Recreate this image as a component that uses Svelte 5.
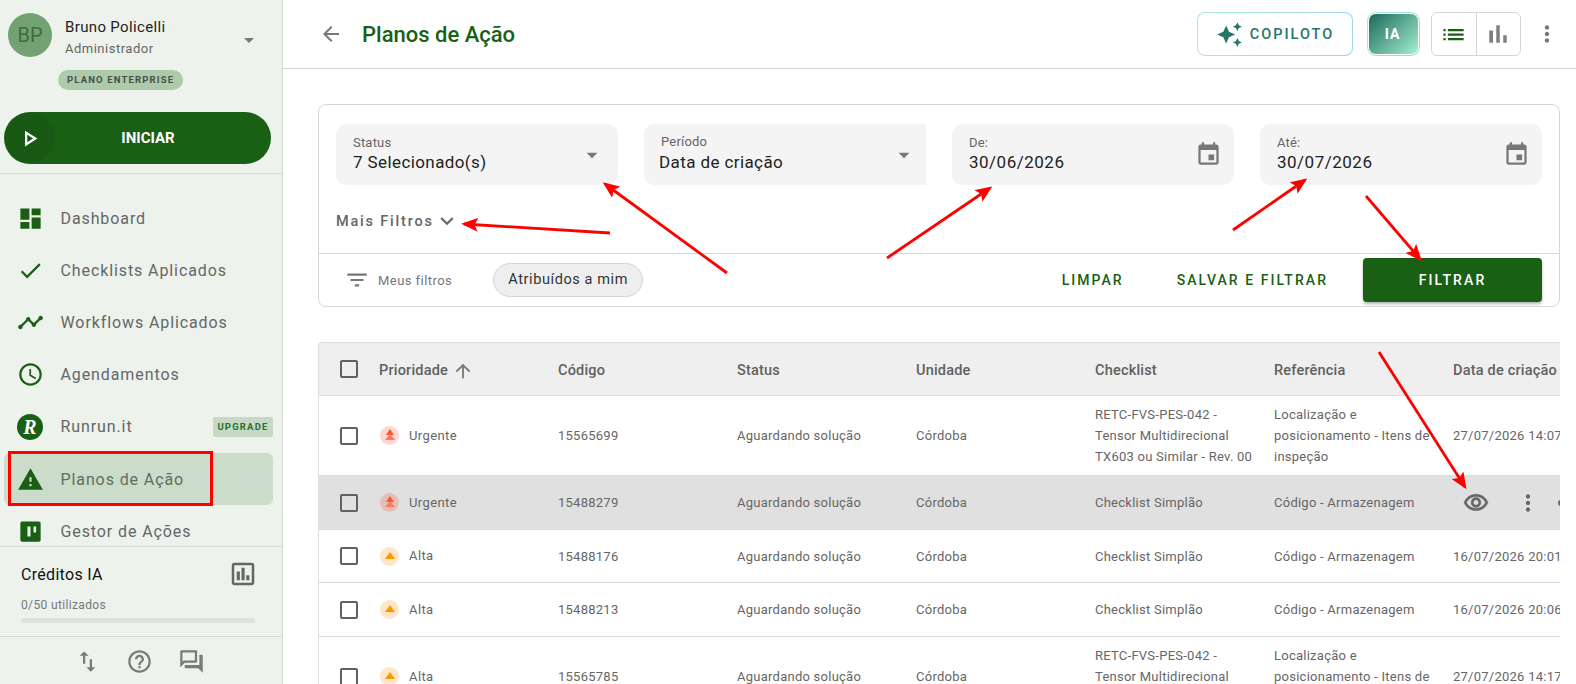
<script>
  const p = {
    dash: 'M3 13h8V3H3v10zm0 8h8v-6H3v6zm10 0h8V11h-8v10zm0-18v6h8V3h-8z',
    check: 'M9 16.17L4.83 12l-1.42 1.41L9 19 21 7l-1.41-1.41z',
    timeline: 'M23 8c0 1.1-.9 2-2 2-.18 0-.35-.02-.51-.07l-3.56 3.55c.05.16.07.34.07.52 0 1.1-.9 2-2 2s-2-.9-2-2c0-.18.02-.36.07-.52l-2.55-2.55c-.16.05-.34.07-.52.07s-.36-.02-.52-.07l-4.55 4.56c.05.16.07.33.07.51 0 1.1-.9 2-2 2s-2-.9-2-2 .9-2 2-2c.18 0 .35.02.51.07l4.56-4.55C8.02 9.36 8 9.18 8 9c0-1.1.9-2 2-2s2 .9 2 2c0 .18-.02.36-.07.52l2.55 2.55c.16-.05.34-.07.52-.07s.36.02.52.07l3.55-3.56C19.02 8.35 19 8.18 19 8c0-1.1.9-2 2-2s2 .9 2 2z',
    clock: 'M11.99 2C6.47 2 2 6.48 2 12s4.47 10 9.99 10C17.52 22 22 17.52 22 12S17.52 2 11.99 2zM12 20c-4.42 0-8-3.58-8-8s3.58-8 8-8 8 3.58 8 8-3.58 8-8 8zm.5-13H11v6l5.25 3.15.75-1.23-4.5-2.67z',
    warn: 'M1 21h22L12 2 1 21zm12-3h-2v-2h2v2zm0-4h-2v-4h2v4z',
    kanban: 'M19.5 3h-15C3.7 3 3 3.7 3 4.5v15c0 .8.7 1.5 1.5 1.5h15c.8 0 1.5-.7 1.5-1.5v-15c0-.8-.7-1.5-1.5-1.5zM9.3 7.5H12v9H9.3v-9zm5.4 0H17v5.4h-2.3V7.5z',
    chart: 'M19 3H5c-1.1 0-2 .9-2 2v14c0 1.1.9 2 2 2h14c1.1 0 2-.9 2-2V5c0-1.1-.9-2-2-2zm0 16H5V5h14v14zM7 10h2.5v7H7zM10.8 7h2.5v10h-2.5zM14.6 13h2.5v4h-2.5z',
    swap: 'M16 17.01V10h-2v7.01h-3L15 21l4-3.99h-3zM9 3L5 6.99h3V14h2V6.99h3L9 3z',
    help: 'M11 18h2v-2h-2v2zm1-16C6.48 2 2 6.48 2 12s4.48 10 10 10 10-4.48 10-10S17.52 2 12 2zm0 18c-4.41 0-8-3.59-8-8s3.59-8 8-8 8 3.59 8 8-3.59 8-8 8zm0-14c-2.21 0-4 1.79-4 4h2c0-1.1.9-2 2-2s2 .9 2 2c0 2-3 1.75-3 5h2c0-2.25 3-2.5 3-5 0-2.21-1.79-4-4-4z',
    forum: 'M15 4v7H5.17l-.59.59-.58.58V4h11m1-2H3c-.55 0-1 .45-1 1v14l4-4h10c.55 0 1-.45 1-1V3c0-.55-.45-1-1-1zm5 4h-2v9H6v2c0 .55.45 1 1 1h11l4 4V7c0-.55-.45-1-1-1z',
    back: 'M20 11H7.83l5.59-5.59L12 4l-8 8 8 8 1.41-1.41L7.83 13H20v-2z',
    spark: 'M19 9l1.25-2.75L23 5l-2.75-1.25L19 1l-1.25 2.75L15 5l2.75 1.25L19 9zm-7.5.5L9 4 6.5 9.5 1 12l5.5 2.5L9 20l2.5-5.5L17 12l-5.5-2.5zM19 15l-1.25 2.75L15 19l2.75 1.25L19 23l1.25-2.75L23 19l-2.75-1.25L19 15z',
    list: 'M3 13h2v-2H3v2zm0 4h2v-2H3v2zm0-8h2V7H3v2zm4 4h14v-2H7v2zm0 4h14v-2H7v2zM7 7v2h14V7H7z',
    bars: 'M5 9.2h3V19H5zM10.6 5h2.8v14h-2.8zm5.6 8H19v6h-2.8z',
    more: 'M12 8c1.1 0 2-.9 2-2s-.9-2-2-2-2 .9-2 2 .9 2 2 2zm0 2c-1.1 0-2 .9-2 2s.9 2 2 2 2-.9 2-2-.9-2-2-2zm0 6c-1.1 0-2 .9-2 2s.9 2 2 2 2-.9 2-2-.9-2-2-2z',
    event: 'M17 12h-5v5h5v-5zM16 1v2H8V1H6v2H5c-1.11 0-1.99.9-1.99 2L3 19c0 1.1.89 2 2 2h14c1.1 0 2-.9 2-2V5c0-1.1-.9-2-2-2h-1V1h-2zm3 18H5V8h14v11z',
    filter: 'M10 18h4v-2h-4v2zM3 6v2h18V6H3zm3 7h12v-2H6v2z',
    expand: 'M16.59 8.59L12 13.17 7.41 8.59 6 10l6 6 6-6z',
    up: 'M4 12l1.41 1.41L11 7.83V20h2V7.83l5.58 5.59L20 12l-8-8-8 8z',
    eye: 'M12 6c3.79 0 7.17 2.13 8.82 5.5C19.17 14.87 15.79 17 12 17s-7.17-2.13-8.82-5.5C4.83 8.13 8.21 6 12 6m0-2C7 4 2.73 7.11 1 11.5 2.73 15.89 7 19 12 19s9.27-3.11 11-7.5C21.27 7.11 17 4 12 4zm0 5c1.38 0 2.5 1.12 2.5 2.5S13.38 14 12 14s-2.5-1.12-2.5-2.5S10.62 9 12 9m0-2c-2.48 0-4.5 2.02-4.5 4.5S9.52 16 12 16s4.5-2.02 4.5-4.5S14.48 7 12 7z',
    box: 'M19 5v14H5V5h14m0-2H5c-1.1 0-2 .9-2 2v14c0 1.1.9 2 2 2h14c1.1 0 2-.9 2-2V5c0-1.1-.9-2-2-2z',
    play: 'M10 8.64L15.27 12 10 15.36V8.64M8 5v14l11-7L8 5z',
    caret: 'M7 10l5 5 5-5z'
  };
  const nav = [
    { label: 'Dashboard', icon: 'dash' },
    { label: 'Checklists Aplicados', icon: 'check' },
    { label: 'Workflows Aplicados', icon: 'timeline' },
    { label: 'Agendamentos', icon: 'clock' },
    { label: 'Runrun.it', runrun: true },
    { label: 'Planos de Ação', icon: 'warn', active: true },
    { label: 'Gestor de Ações', icon: 'kanban' }
  ];
  const longCheck = ['RETC-FVS-PES-042 -', 'Tensor Multidirecional', 'TX603 ou Similar - Rev. 00'];
  const longRef = ['Localização e', 'posicionamento - Itens de', 'inspeção'];
  const shortCheck = ['Checklist Simplão'];
  const shortRef = ['Código - Armazenagem'];
  const rows = [
    { pr: 'Urgente', code: '15565699', check: longCheck, ref: longRef, date: '27/07/2026 14:07', size: 'tall' },
    { pr: 'Urgente', code: '15488279', check: shortCheck, ref: shortRef, hover: true, size: 'mid' },
    { pr: 'Alta', code: '15488176', check: shortCheck, ref: shortRef, date: '16/07/2026 20:01', size: 'low' },
    { pr: 'Alta', code: '15488213', check: shortCheck, ref: shortRef, date: '16/07/2026 20:06', size: 'low2' },
    { pr: 'Alta', code: '15565785', check: longCheck, ref: longRef, date: '27/07/2026 14:17', size: 'tall' }
  ];
  const arrows = [
    [727, 273, 605, 184],
    [610, 233, 464, 224],
    [887, 258, 990, 188],
    [1233, 230, 1305, 180],
    [1366, 196, 1420, 259],
    [1379, 352, 1465, 487]
  ];
</script>

<div class="page">
  <aside class="side">
    <div class="profile">
      <div class="avatar">BP</div>
      <div class="who">
        <div class="name">Bruno Policelli</div>
        <div class="role">Administrador</div>
      </div>
      <svg class="caret-top" viewBox="0 0 24 24"><path d={p.caret} /></svg>
    </div>
    <div class="plan-wrap"><span class="plan">PLANO ENTERPRISE</span></div>
    <button class="start">
      <span class="start-ic"><svg viewBox="0 0 24 24"><path d={p.play} /></svg></span>
      <span class="start-t">INICIAR</span>
    </button>
    <nav class="nav">
      {#each nav as n}
        <div class="item" class:active={n.active}>
          <span class="nav-ic">
            {#if n.runrun}
              <span class="rr">R</span>
            {:else}
              <svg viewBox="0 0 24 24"><path d={p[n.icon]} fill-rule="evenodd" /></svg>
            {/if}
          </span>
          <span class="nav-t">{n.label}</span>
          {#if n.runrun}<span class="upg">UPGRADE</span>{/if}
        </div>
      {/each}
    </nav>
    <div class="credits">
      <div class="cr-top">
        <span class="cr-t">Créditos IA</span>
        <svg viewBox="0 0 24 24"><path d={p.chart} /></svg>
      </div>
      <div class="cr-u">0/50 utilizados</div>
      <div class="cr-bar"></div>
    </div>
    <div class="foot">
      <svg viewBox="0 0 24 24"><path d={p.swap} /></svg>
      <svg viewBox="0 0 24 24"><path d={p.help} /></svg>
      <svg viewBox="0 0 24 24"><path d={p.forum} /></svg>
    </div>
  </aside>

  <main class="main">
    <header class="top">
      <svg class="back" viewBox="0 0 24 24"><path d={p.back} /></svg>
      <h1>Planos de Ação</h1>
      <div class="grow"></div>
      <div class="copi"><div class="copi-in">
        <svg viewBox="0 0 24 24"><path d={p.spark} /></svg>
        <span>COPILOTO</span>
      </div></div>
      <div class="ia"><div class="ia-in">IA</div></div>
      <div class="toggle">
        <span class="tg"><svg class="on" viewBox="0 0 24 24"><path d={p.list} /></svg></span>
        <span class="tg"><svg viewBox="0 0 24 24"><path d={p.bars} /></svg></span>
      </div>
      <svg class="kebab" viewBox="0 0 24 24"><path d={p.more} /></svg>
    </header>

    <div class="content">
      <section class="card">
        <div class="fields">
          <div class="field">
            <div class="lab">Status</div>
            <div class="val">7 Selecionado(s)</div>
            <svg class="fic caret" viewBox="0 0 24 24"><path d={p.caret} /></svg>
          </div>
          <div class="field period">
            <div class="lab">Período</div>
            <div class="val">Data de criação</div>
            <svg class="fic caret" viewBox="0 0 24 24"><path d={p.caret} /></svg>
          </div>
          <div class="field date">
            <div class="lab">De:</div>
            <div class="val">30/06/2026</div>
            <svg class="fic" viewBox="0 0 24 24"><path d={p.event} /></svg>
          </div>
          <div class="field date">
            <div class="lab">Até:</div>
            <div class="val">30/07/2026</div>
            <svg class="fic" viewBox="0 0 24 24"><path d={p.event} /></svg>
          </div>
        </div>
        <div class="more">
          <span>Mais Filtros</span>
          <svg viewBox="0 0 24 24"><path d={p.expand} /></svg>
        </div>
        <div class="actions">
          <svg class="filt" viewBox="0 0 24 24"><path d={p.filter} /></svg>
          <span class="meus">Meus filtros</span>
          <span class="chip">Atribuídos a mim</span>
          <div class="grow"></div>
          <span class="txt-btn limpar">LIMPAR</span>
          <span class="txt-btn salvar">SALVAR E FILTRAR</span>
          <span class="filtrar">FILTRAR</span>
        </div>
      </section>

      <section class="table">
        <div class="row head">
          <div class="cb"><svg viewBox="0 0 24 24"><path d={p.box} /></svg></div>
          <div class="hc">Prioridade <svg class="up" viewBox="0 0 24 24"><path d={p.up} /></svg></div>
          <div>Código</div>
          <div>Status</div>
          <div>Unidade</div>
          <div>Checklist</div>
          <div>Referência</div>
          <div class="nw">Data de criação</div>
        </div>
        {#each rows as r}
          <div class="row {r.size}" class:hover={r.hover}>
            <div class="cb"><svg viewBox="0 0 24 24"><path d={p.box} /></svg></div>
            <div class="prio">
              {#if r.pr === 'Urgente'}
                <span class="pi red"><i class="tri t1"></i><i class="tri t2"></i></span>
              {:else}
                <span class="pi org"><i class="tri t3"></i></span>
              {/if}
              <span class="pt">{r.pr}</span>
            </div>
            <div>{r.code}</div>
            <div>Aguardando solução</div>
            <div>Córdoba</div>
            <div class="multi">{#each r.check as l}<div class="nw">{l}</div>{/each}</div>
            <div class="multi">{#each r.ref as l}<div class="nw">{l}</div>{/each}</div>
            {#if r.hover}
              <div class="acts">
                <svg class="eye" viewBox="0 0 24 24"><path d={p.eye} /></svg>
                <svg class="kb" viewBox="0 0 24 24"><path d={p.more} /></svg>
                <span class="edge"></span>
              </div>
            {:else}
              <div class="nw">{r.date}</div>
            {/if}
          </div>
        {/each}
      </section>
    </div>
  </main>

  <div class="ann-box"></div>
  <svg class="ann" viewBox="0 0 1576 684">
    <defs>
      <marker id="h" markerWidth="6" markerHeight="5" refX="5" refY="2.5" orient="auto" markerUnits="strokeWidth">
        <path d="M0 0L6 2.5L0 5L1.2 2.5z" fill="#f00" />
      </marker>
    </defs>
    {#each arrows as a}
      <line x1={a[0]} y1={a[1]} x2={a[2]} y2={a[3]} stroke="#f00" stroke-width="2.8" marker-end="url(#h)" />
    {/each}
  </svg>
</div>

<style>
  :global(body) { margin: 0; background: #fff; }
  .page { position: relative; display: flex; width: 1576px; height: 684px; overflow: hidden; font-family: Roboto, "Liberation Sans", sans-serif; color: #666; }
  svg { fill: currentColor; display: block; flex: none; }

  .side { width: 282px; flex: none; background: #edf2ed; border-right: 1px solid #d4d8d4; display: flex; flex-direction: column; height: 684px; }
  .profile { display: flex; align-items: center; padding: 13px 8px 0; height: 44px; flex: none; }
  .avatar { width: 44px; height: 44px; border-radius: 50%; background: #72a172; color: #3f6b42; font-size: 20px; display: flex; align-items: center; justify-content: center; flex: none; }
  .who { margin-left: 13px; flex: 1; }
  .name { font-size: 15px; color: #222; letter-spacing: .35px; line-height: 20px; margin-top: 6px; }
  .role { font-size: 13px; color: #666; letter-spacing: .5px; line-height: 20px; margin-top: 2px; }
  .caret-top { width: 24px; height: 24px; color: #777; margin-right: 13px; margin-top: 9px; }
  .plan-wrap { padding: 13px 0 0 58px; height: 20px; flex: none; margin-top: -2px; }
  .plan { display: inline-block; height: 20px; line-height: 20px; padding: 0 9px; border-radius: 10px; background: #adcaad; color: #474f47; font-size: 9.5px; font-weight: 700; letter-spacing: 1.15px; }
  .start { margin: 24px 0 0 4px; width: 267px; height: 52px; border: 0; border-radius: 26px; background: #195f14; color: #fff; display: flex; align-items: center; padding: 0; font: inherit; flex: none; }
  .start-ic { width: 50px; height: 50px; border-radius: 50%; background: #185a13; display: flex; align-items: center; justify-content: center; margin-left: 1px; }
  .start-ic svg { width: 27px; height: 27px; margin-left: -1px; }
  .start-t { flex: 1; text-align: center; font-weight: 700; font-size: 15px; padding-right: 30px; }
  .nav { margin-top: 9px; border-top: 1px solid #d6dad6; flex: 1; min-height: 0; overflow: hidden; padding-top: 18px; }
  .item { height: 52.2px; margin: 0 9px 0 4px; display: flex; align-items: center; padding-left: 13px; border-radius: 6px; }
  .item.active { background: #cbdcca; }
  .nav-ic { width: 26px; height: 26px; color: #195f14; margin-right: 17.5px; display: flex; align-items: center; justify-content: center; flex: none; }
  .nav-ic svg { width: 27px; height: 27px; }
  .rr { width: 26px; height: 26px; flex: none; border-radius: 50%; background: #195f14; color: #fff; font: italic 700 20px/26px "Liberation Serif", serif; text-align: center; }
  .nav-t { font-size: 16px; letter-spacing: .9px; color: #666; flex: 1; }
  .active .nav-t { color: #5e6f5e; }
  .upg { width: 60px; height: 20px; line-height: 20px; background: #c5d9c5; color: #2c6e2c; border-radius: 2px; font-size: 9.5px; font-weight: 700; letter-spacing: 1.2px; text-align: center; }

  .credits { height: 89px; flex: none; border-top: 1px solid #d9dcd9; border-bottom: 1px solid #d9dcd9; padding: 0 27px 0 21px; }
  .cr-top { display: flex; align-items: center; justify-content: space-between; height: 30px; margin-top: 12px; }
  .cr-top svg { width: 30px; height: 30px; color: #666; margin-right: -3px; }
  .cr-t { font-size: 16px; color: #111; letter-spacing: .3px; }
  .cr-u { font-size: 12px; color: #777; letter-spacing: .35px; margin-top: 8px; line-height: 16px; }
  .cr-bar { height: 5px; border-radius: 3px; background: #dfe1df; margin-top: 5px; }
  .foot { height: 47px; box-sizing: border-box; padding: 2px 4px 0 0; flex: none; display: flex; align-items: center; justify-content: center; gap: 25px; color: #7a7a7a; }
  .foot svg { width: 27px; height: 27px; }

  .main { flex: 1; min-width: 0; display: flex; flex-direction: column; }
  .top { height: 68px; flex: none; border-bottom: 1px solid #d7d7d7; display: flex; align-items: center; padding-right: 16px; }
  .back { width: 24px; height: 24px; color: #777; margin-left: 36px; }
  h1 { font-size: 22px; font-weight: 500; margin: 0 0 0 19px; color: #195f14; }
  .grow { flex: 1; }
  .copi { width: 156px; height: 44px; border-radius: 8px; padding: 1px; box-sizing: border-box; background: linear-gradient(90deg, #a8ebd3, #9fd0ee); }
  .copi-in { height: 100%; border-radius: 7px; background: #fff; display: flex; align-items: center; justify-content: center; gap: 7px; color: #24756a; }
  .copi-in svg { width: 27px; height: 27px; }
  .copi-in span { font-size: 14.5px; font-weight: 500; letter-spacing: 2px; }
  .ia { width: 53px; height: 44px; margin-left: 14px; border-radius: 9px; padding: 1px; box-sizing: border-box; background: linear-gradient(135deg, #a8ebd3, #9fd0ee); }
  .ia-in { height: 100%; border-radius: 8px; border: 1px solid #fff; box-sizing: border-box; background: linear-gradient(135deg, #226f62 5%, #a4f0cf 100%); color: #fff; font-size: 14px; font-weight: 700; letter-spacing: 1px; display: flex; align-items: center; justify-content: center; padding-right: 2px; }
  .toggle { width: 90px; height: 44px; margin-left: 11px; border: 1px solid #d6d6d6; border-radius: 6px; box-sizing: border-box; display: flex; }
  .tg { flex: 1; display: flex; align-items: center; justify-content: center; color: #808080; }
  .tg:first-child { border-right: 1px solid #d6d6d6; }
  .tg svg { width: 27px; height: 27px; }
  .tg svg.on { color: #195f14; }
  .tg svg:not(.on) { width: 30px; height: 30px; }
  .kebab { width: 26px; height: 26px; color: #777; margin-left: 13px; }

  .content { padding: 35px 16px 0 35px; flex: 1; min-height: 0; }
  .card { border: 1px solid #d7d7d7; border-radius: 8px; height: 203px; box-sizing: border-box; display: flex; flex-direction: column; }
  .fields { display: grid; grid-template-columns: repeat(4, 282px); gap: 26px; padding: 19px 0 0 17px; }
  .field { position: relative; height: 61px; background: #f4f4f4; border-radius: 10px; box-sizing: border-box; padding: 11px 0 0 17px; }
  .field.period { border-radius: 10px 0 0 10px; padding-left: 17px; padding-top: 10px; }
  .period .val { margin-left: -2px; margin-top: 1px; }
  .lab { font-size: 13px; line-height: 16px; color: #666; letter-spacing: .2px; }
  .val { font-size: 17px; line-height: 22px; color: #222; letter-spacing: .4px; margin-top: 0; }
  .date .val { letter-spacing: .5px; }
  .fic { position: absolute; right: 12px; top: 17px; width: 27px; height: 27px; color: #777; }
  .caret { right: 13px; top: 18px; width: 26px; height: 26px; }
  .period .caret { right: 9px; }
  .more { display: flex; align-items: center; gap: 0; margin: 24px 0 0 17px; height: 24px; color: #666; font-size: 14.5px; font-weight: 500; letter-spacing: 1.8px; flex: none; }
  .more svg { width: 26px; height: 26px; }
  .actions { margin-top: 20px; border-top: 1px solid #d7d7d7; flex: 1; display: flex; align-items: center; padding: 0 17px 0 25px; }
  .filt { width: 26px; height: 26px; color: #777; }
  .meus { margin-left: 8px; font-size: 13px; letter-spacing: .45px; color: #777; }
  .chip { margin-left: 41px; height: 34px; line-height: 32px; padding: 0 14px; box-sizing: border-box; border: 1px solid #d7d7d7; border-radius: 17px; background: #eeeeee; color: #333; font-size: 14.5px; letter-spacing: .6px; }
  .txt-btn { color: #195f14; font-size: 14px; font-weight: 500; letter-spacing: 2.05px; }
  .salvar { margin-left: 53px; }
  .filtrar { margin-left: 35px; width: 179px; height: 44px; line-height: 44px; text-align: center; border-radius: 4px; background: #195f14; color: #fff; font-size: 14px; font-weight: 500; letter-spacing: 2.1px; box-shadow: 0 2px 3px rgba(0,0,0,.3); }

  .table { margin-top: 35px; border: 1px solid #dedede; border-bottom: 0; border-right: 0; border-radius: 4px 0 0 0; overflow: hidden; }
  .row { display: grid; grid-template-columns: 60px repeat(6, 179px) 1fr; align-items: center; border-bottom: 1px solid #dcdcdc; box-sizing: border-box; font-size: 13px; color: #666; letter-spacing: .25px; line-height: 21px; background: #fff; }
  .head { height: 53px; padding-top: 3px; background: #efefef; font-size: 14.5px; font-weight: 500; color: #616161; letter-spacing: .2px; }
  .head .cb { margin-top: -4px; }
  .tall { height: 80px; }
  .mid { height: 54px; }
  .low { height: 53px; }
  .low2 { height: 54px; }
  .hover { background: #e0e0e0; }
  .nw { white-space: nowrap; }
  .cb { display: flex; justify-content: center; padding-right: 1px; color: #616161; }
  .cb svg { width: 24px; height: 24px; }
  .hc { display: flex; align-items: center; gap: 4px; }
  .up { width: 22px; height: 22px; color: #777; }
  .prio { display: flex; align-items: center; }
  .pt { margin-left: 10px; margin-top: -1px; letter-spacing: .4px; }
  .pi { width: 19px; height: 19px; border-radius: 50%; position: relative; flex: none; margin-left: 1px; }
  .pi.red { background: #fcd8d2; }
  .hover .pi.red { background: #e8bdb7; }
  .pi.org { background: #fde7c8; }
  .tri { position: absolute; left: 50%; width: 0; height: 0; border-left: 5.5px solid transparent; border-right: 5.5px solid transparent; transform: translateX(-50%); }
  .t1 { top: 3px; border-left-width: 4.5px; border-right-width: 4.5px; border-bottom: 6px solid #fb5530; }
  .t2 { top: 8px; border-left-width: 5px; border-right-width: 5px; border-bottom: 6px solid #fb7a5e; }
  .t3 { top: 5px; border-bottom: 7px solid #ff9800; }
  .acts { display: flex; align-items: center; color: #666; height: 24px; }
  .eye { width: 26px; height: 26px; margin-left: 10px; stroke: currentColor; stroke-width: .5; }
  .kb { width: 26px; height: 26px; margin-left: 26px; }
  .edge { width: 6px; height: 6px; border-radius: 50%; background: #666; margin-left: 17px; flex: none; }

  .ann-box { position: absolute; left: 8px; top: 451px; width: 205px; height: 55px; border: 3px solid #f00; box-sizing: border-box; pointer-events: none; }
  .ann { position: absolute; left: 0; top: 0; width: 1576px; height: 684px; pointer-events: none; fill: none; }
</style>
